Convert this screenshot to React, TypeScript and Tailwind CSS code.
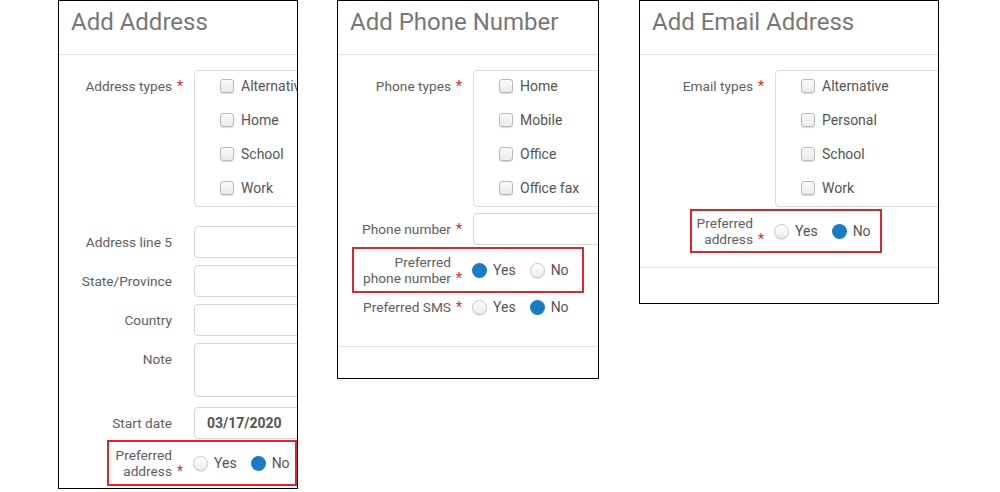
import React from "react";

const font = { fontFamily: "Roboto, 'Liberation Sans', sans-serif" };

function Label({ children, req, two }: { children: React.ReactNode; req?: boolean; two?: boolean }) {
  return (
    <div
      className={
        "w-[125px] shrink-0 flex justify-end items-end text-[13.7px] text-[#606060] " +
        (two ? "leading-[16px]" : "leading-[20px]")
      }
    >
      <div className="text-right whitespace-nowrap">{children}</div>
      <div className="w-[12px] shrink-0 pl-[5px] text-[14px] text-[#e0262b]">{req ? "*" : ""}</div>
    </div>
  );
}

function Checkbox({ label }: { label: string }) {
  return (
    <div className="flex items-center h-[20px] gap-[7px]">
      <span className="w-[14px] h-[14px] rounded-[3px] border border-[#b9b9b9] bg-gradient-to-b from-[#fbfbfb] to-[#e9e9e9] shadow-[0_1px_1px_rgba(0,0,0,0.15)]" />
      <span className="text-[14px] text-[#555] whitespace-nowrap leading-[20px]">{label}</span>
    </div>
  );
}

function Radio({ label, checked }: { label: string; checked?: boolean }) {
  return (
    <div className="flex items-center gap-[6px]">
      {checked ? (
        <span className="w-[15px] h-[15px] rounded-full bg-[#1a7bc3]" />
      ) : (
        <span className="w-[15px] h-[15px] rounded-full border border-[#c8c8c8] bg-gradient-to-b from-[#ffffff] to-[#ececec] shadow-[0_1px_1px_rgba(0,0,0,0.12)]" />
      )}
      <span className="text-[14px] text-[#555] leading-[20px]">{label}</span>
    </div>
  );
}

function Radios({ yes }: { yes: boolean }) {
  return (
    <div className="flex items-center gap-[14px] ml-[-1px]">
      <Radio label="Yes" checked={yes} />
      <Radio label="No" checked={!yes} />
    </div>
  );
}

function TypesRow({ label, items }: { label: string; items: string[] }) {
  return (
    <div className="flex gap-[10px]">
      <div className="pt-[6px]">
        <Label req>{label}</Label>
      </div>
      <div className="w-[220px] shrink-0 h-[137px] border border-[#dcdcdc] rounded-[4px] pl-[25px] pt-[5px] flex flex-col gap-[14px]">
        {items.map((i) => (
          <Checkbox key={i} label={i} />
        ))}
      </div>
    </div>
  );
}

function InputRow({
  label,
  req,
  h = 32,
  value,
  className = "",
}: {
  label: string;
  req?: boolean;
  h?: number;
  value?: string;
  className?: string;
}) {
  return (
    <div className={"flex gap-[10px] " + className}>
      <div className="h-[32px] flex items-center justify-end">
        <Label req={req}>{label}</Label>
      </div>
      <div
        className="w-[220px] shrink-0 border border-[#d6d6d6] rounded-[4px] flex items-center pl-[12px] text-[14px] font-bold text-[#555]"
        style={{ height: h }}
      >
        {value}
      </div>
    </div>
  );
}

function PrefRow({
  lines,
  yes,
  boxLeft,
  boxWidth,
  h,
  className = "",
}: {
  lines: [string, string];
  yes: boolean;
  boxLeft: number;
  boxWidth: number;
  h: number;
  className?: string;
}) {
  return (
    <div className={"relative flex items-center gap-[10px] " + className} style={{ height: h }}>
      <Label req two>
        {lines[0]}
        <br />
        {lines[1]}
      </Label>
      <Radios yes={yes} />
      <div
        className="absolute top-0 border-2 border-[#e3222a] pointer-events-none"
        style={{ left: boxLeft, width: boxWidth, height: h }}
      />
    </div>
  );
}

function Panel({
  title,
  w,
  h,
  children,
}: {
  title: string;
  w: number;
  h: number;
  children: React.ReactNode;
}) {
  return (
    <div
      className="shrink-0 border border-black bg-white overflow-hidden flex flex-col"
      style={{ width: w, height: h }}
    >
      <div className="h-[54px] shrink-0 border-b border-[#e2e2e2] pl-[12px] pt-[7px]">
        <div className="text-[24px] leading-[28px] text-[#777] whitespace-nowrap">{title}</div>
      </div>
      <div className="pt-[15px] flex flex-col flex-1">{children}</div>
    </div>
  );
}

export default function App() {
  return (
    <div className="w-[1000px] h-[492px] bg-white flex items-start pl-[58px]" style={font}>
      <Panel title="Add Address" w={240} h={489}>
        <TypesRow label="Address types" items={["Alternative", "Home", "School", "Work"]} />
        <InputRow label="Address line 5" className="mt-[19px]" />
        <InputRow label="State/Province" className="mt-[7px]" />
        <InputRow label="Country" className="mt-[7px]" />
        <InputRow label="Note" h={54} className="mt-[7px]" />
        <InputRow label="Start date" value="03/17/2020" className="mt-[10px]" />
        <PrefRow lines={["Preferred", "address"]} yes={false} boxLeft={48} boxWidth={190} h={46} className="mt-[1px]" />
      </Panel>

      <div className="w-[39px] shrink-0" />

      <Panel title="Add Phone Number" w={262} h={379}>
        <TypesRow label="Phone types" items={["Home", "Mobile", "Office", "Office fax"]} />
        <InputRow label="Phone number" req className="mt-[6px]" />
        <PrefRow lines={["Preferred", "phone number"]} yes={true} boxLeft={14} boxWidth={232} h={46} className="mt-[2px]" />
        <div className="flex items-center gap-[10px] h-[20px] mt-[4px]">
          <Label req>Preferred SMS</Label>
          <Radios yes={false} />
        </div>
        <div className="mt-auto h-[32px] border-t border-[#e2e2e2]" />
      </Panel>

      <div className="w-[40px] shrink-0" />

      <Panel title="Add Email Address" w={300} h={304}>
        <TypesRow label="Email types" items={["Alternative", "Personal", "School", "Work"]} />
        <PrefRow lines={["Preferred", "address"]} yes={false} boxLeft={50} boxWidth={192} h={44} className="mt-[2px]" />
        <div className="mt-auto h-[36px] border-t border-[#e2e2e2]" />
      </Panel>
    </div>
  );
}
